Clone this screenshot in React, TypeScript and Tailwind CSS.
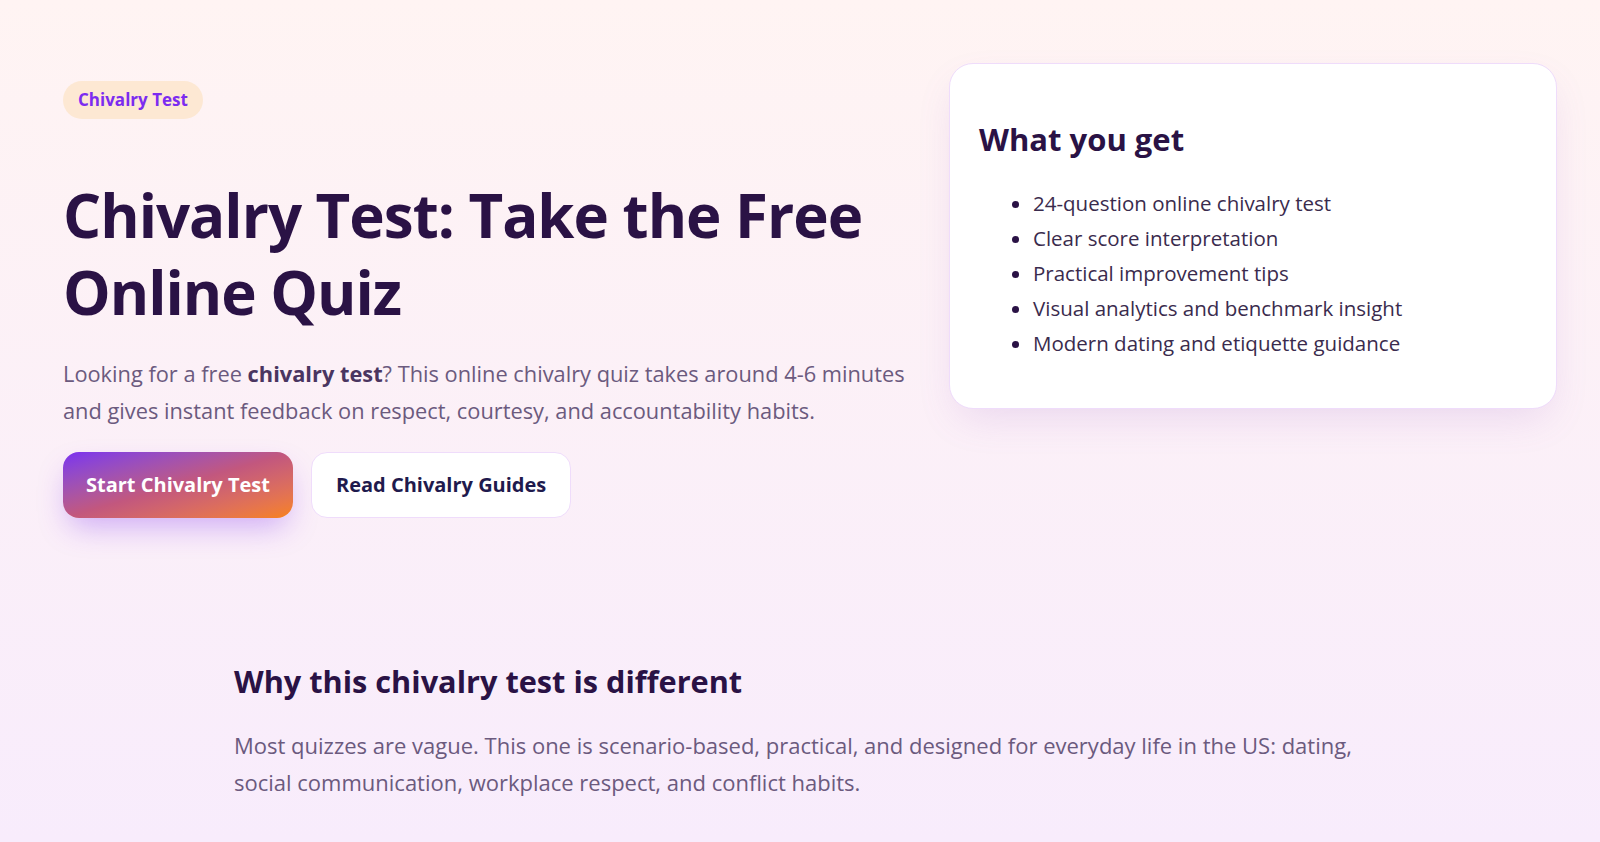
export default function App() {
  return (
    <div
      className="min-h-[842px] w-full bg-gradient-to-b from-[#fff4f3] to-[#f8ecfc] text-[#2a1245]"
      style={{ fontFamily: '"Open Sans", "Noto Sans", sans-serif' }}
    >
      <section className="flex items-start justify-between pl-[63px] pr-[43px] pt-[63px]">
        <div className="w-[850px] pt-[18px]">
          <span className="inline-flex h-[38px] items-center rounded-full bg-[#fde8d3] px-[15px] text-[17px] font-bold text-[#7c2cf0]">
            Chivalry Test
          </span>
          <h1 className="mt-[58px] text-[60px] font-bold leading-[77px] tracking-[-1px]">
            Chivalry Test: Take the Free Online Quiz
          </h1>
          <p className="mt-[24px] text-[21.8px] leading-[37px] text-[#6b5a7e]">
            Looking for a free <strong className="font-bold text-[#4a3560]">chivalry test</strong>? This online chivalry
            quiz takes around 4-6 minutes and gives instant feedback on respect, courtesy, and accountability habits.
          </p>
          <div className="mt-[23px] flex gap-[18px]">
            <button className="h-[66px] rounded-[16px] bg-gradient-to-br from-[#7c2cf0] via-[#c2577e] to-[#f8820b] px-[23px] text-[20px] font-bold text-white shadow-[0_14px_30px_-6px_rgba(124,44,240,0.35)]">
              Start Chivalry Test
            </button>
            <button className="h-[66px] rounded-[16px] border border-[#efdcfb] bg-white px-[24px] text-[20px] font-bold text-[#1f1a4d]">
              Read Chivalry Guides
            </button>
          </div>
        </div>
        <div className="h-[346px] w-[608px] rounded-[24px] border border-[#efdcfb] bg-white px-[29px] pt-[55px] shadow-[0_16px_40px_-10px_rgba(150,90,200,0.18)]">
          <h2 className="text-[31px] font-bold leading-[40px]">What you get</h2>
          <ul className="mt-[27px] list-disc pl-[54px] text-[20.5px] leading-[35px] text-[#3a2b4d] marker:text-[#2a1245]">
            <li>24-question online chivalry test</li>
            <li>Clear score interpretation</li>
            <li>Practical improvement tips</li>
            <li>Visual analytics and benchmark insight</li>
            <li>Modern dating and etiquette guidance</li>
          </ul>
        </div>
      </section>
      <section className="mx-auto mt-[143px] max-w-[1132px]">
        <h2 className="text-[30.7px] font-bold leading-[40px]">Why this chivalry test is different</h2>
        <p className="mt-[26px] text-[22px] leading-[37px] text-[#6b5a7e]">
          Most quizzes are vague. This one is scenario-based, practical, and designed for everyday life in the US: dating,
          social communication, workplace respect, and conflict habits.
        </p>
      </section>
    </div>
  );
}
